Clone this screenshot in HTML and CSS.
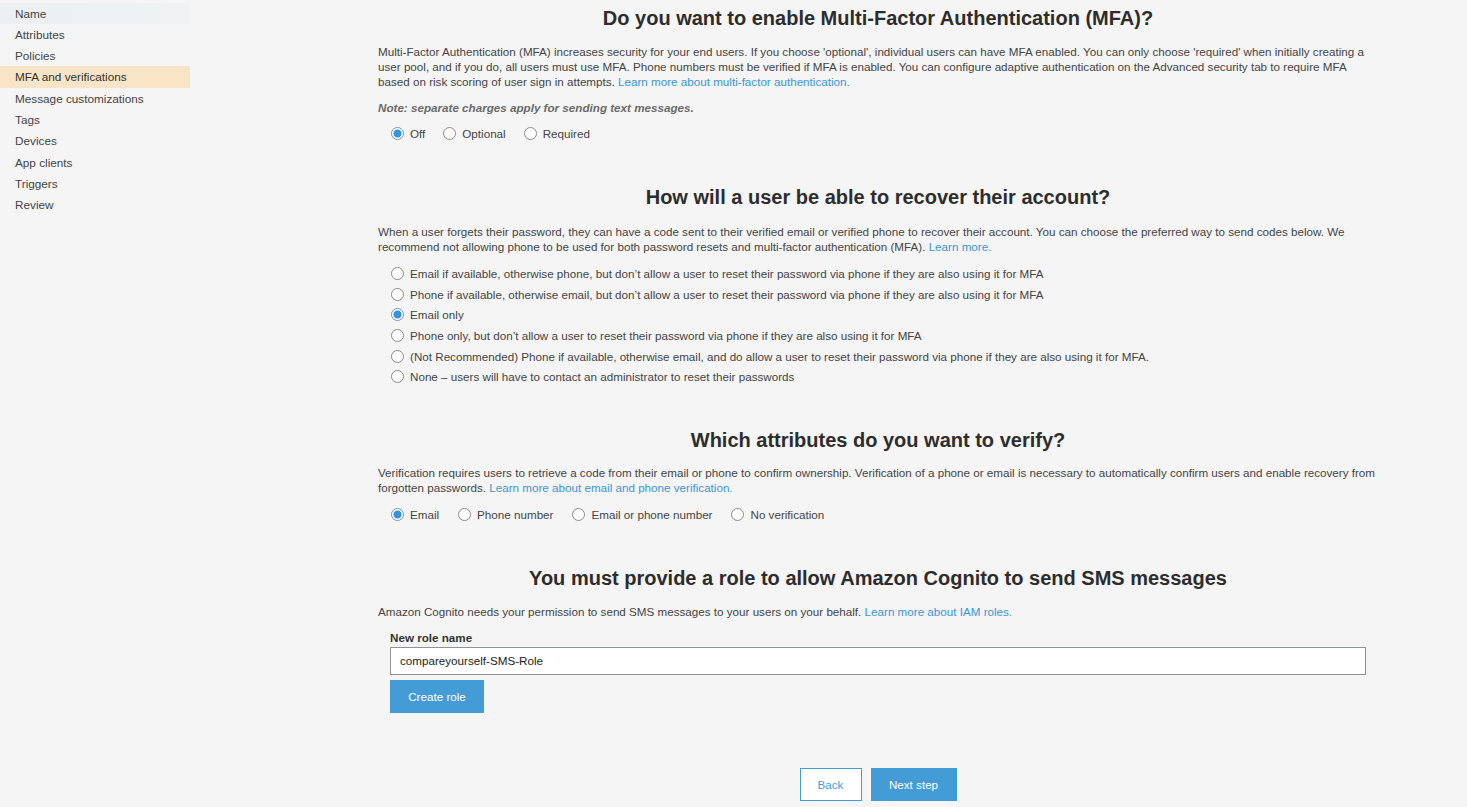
FILE: index.html
```html
<!DOCTYPE html>
<html lang="en">
<head>
<meta charset="utf-8">
<title>MFA and verifications</title>
<link rel="stylesheet" href="styles.css">
</head>
<body>
<div class="page">
  <nav class="sidebar">
    <a class="nav-item nav-hover">Name</a>
    <a class="nav-item">Attributes</a>
    <a class="nav-item">Policies</a>
    <a class="nav-item nav-active">MFA and verifications</a>
    <a class="nav-item">Message customizations</a>
    <a class="nav-item">Tags</a>
    <a class="nav-item">Devices</a>
    <a class="nav-item">App clients</a>
    <a class="nav-item">Triggers</a>
    <a class="nav-item">Review</a>
  </nav>
  <main class="content">
    <section class="section section-first">
      <h2 class="title">Do you want to enable Multi-Factor Authentication (MFA)?</h2>
      <p class="desc">Multi-Factor Authentication (MFA) increases security for your end users. If you choose 'optional', individual users can have MFA enabled. You can only choose 'required' when initially creating a user pool, and if you do, all users must use MFA. Phone numbers must be verified if MFA is enabled. You can configure adaptive authentication on the Advanced security tab to require MFA based on risk scoring of user sign in attempts. <a class="link">Learn more about multi-factor authentication.</a></p>
      <p class="note">Note: separate charges apply for sending text messages.</p>
      <div class="radio-row">
        <label class="radio"><input type="radio" name="mfa" checked><span>Off</span></label>
        <label class="radio"><input type="radio" name="mfa"><span>Optional</span></label>
        <label class="radio"><input type="radio" name="mfa"><span>Required</span></label>
      </div>
    </section>

    <section class="section section-recover">
      <h2 class="title">How will a user be able to recover their account?</h2>
      <p class="desc">When a user forgets their password, they can have a code sent to their verified email or verified phone to recover their account. You can choose the preferred way to send codes below. We recommend not allowing phone to be used for both password resets and multi-factor authentication (MFA). <a class="link">Learn more.</a></p>
      <div class="radio-list">
        <label class="radio"><input type="radio" name="rec"><span>Email if available, otherwise phone, but don’t allow a user to reset their password via phone if they are also using it for MFA</span></label>
        <label class="radio"><input type="radio" name="rec"><span>Phone if available, otherwise email, but don’t allow a user to reset their password via phone if they are also using it for MFA</span></label>
        <label class="radio"><input type="radio" name="rec" checked><span>Email only</span></label>
        <label class="radio"><input type="radio" name="rec"><span>Phone only, but don’t allow a user to reset their password via phone if they are also using it for MFA</span></label>
        <label class="radio"><input type="radio" name="rec"><span>(Not Recommended) Phone if available, otherwise email, and do allow a user to reset their password via phone if they are also using it for MFA.</span></label>
        <label class="radio"><input type="radio" name="rec"><span>None – users will have to contact an administrator to reset their passwords</span></label>
      </div>
    </section>

    <section class="section section-verify">
      <h2 class="title">Which attributes do you want to verify?</h2>
      <p class="desc">Verification requires users to retrieve a code from their email or phone to confirm ownership. Verification of a phone or email is necessary to automatically confirm users and enable recovery from forgotten passwords. <a class="link">Learn more about email and phone verification.</a></p>
      <div class="radio-row radio-row-3">
        <label class="radio"><input type="radio" name="ver" checked><span>Email</span></label>
        <label class="radio"><input type="radio" name="ver"><span>Phone number</span></label>
        <label class="radio"><input type="radio" name="ver"><span>Email or phone number</span></label>
        <label class="radio"><input type="radio" name="ver"><span>No verification</span></label>
      </div>
    </section>

    <section class="section">
      <h2 class="title">You must provide a role to allow Amazon Cognito to send SMS messages</h2>
      <p class="desc">Amazon Cognito needs your permission to send SMS messages to your users on your behalf. <a class="link">Learn more about IAM roles.</a></p>
      <div class="role-form">
        <label class="field-label" for="role">New role name</label>
        <input id="role" class="text-input" type="text" value="compareyourself-SMS-Role">
        <div><button class="btn btn-primary btn-create">Create role</button></div>
      </div>
    </section>

    <div class="footer-actions">
      <button class="btn btn-secondary">Back</button>
      <button class="btn btn-primary">Next step</button>
    </div>
  </main>
</div>
</body>
</html>
```

FILE: styles.css
```css
html, body {
  margin: 0;
  padding: 0;
  background: #f4f5f4;
}

body {
  font-family: "Liberation Sans", Arial, sans-serif;
  font-size: 11.65px;
  color: #444;
}

.page {
  display: flex;
  align-items: flex-start;
}

.sidebar {
  width: 190px;
  flex: 0 0 190px;
  display: flex;
  flex-direction: column;
  padding-top: 2.5px;
}

.nav-item {
  display: block;
  height: 21.33px;
  line-height: 21.33px;
  padding-left: 15px;
  color: #444;
  font-size: 11.75px;
  white-space: nowrap;
}

.nav-hover {
  background: linear-gradient(90deg, #edf0f2 0%, #eef1f3 70%, #f1f3f3 100%);
}

.nav-active {
  background: #f7e5c6;
  color: #333;
}

.content {
  width: 1000px;
  margin-left: 188px;
  padding-bottom: 6px;
}

.section {
  margin-top: 41.5px;
}

.section-first {
  margin-top: 6px;
}

.section-verify {
  margin-top: 40.5px;
}

.title {
  margin: 0;
  font-size: 20px;
  line-height: 24px;
  font-weight: bold;
  color: #2d2d2d;
  text-align: center;
}

.desc {
  margin: 14px 0 0;
  line-height: 15px;
  color: #444;
}

.section-recover .desc {
  margin-top: 15px;
}

.section-verify .desc {
  margin-top: 13.5px;
}

.link {
  color: #3d94d6;
  cursor: pointer;
}

.note {
  margin: 11px 0 0;
  line-height: 15px;
  font-weight: bold;
  font-style: italic;
  color: #6a6a6a;
}

.radio-row {
  display: flex;
  gap: 17px;
  margin-top: 8.5px;
  padding-left: 12px;
  height: 20px;
  align-items: center;
}

.radio-row-3 {
  margin-top: 9px;
  gap: 18px;
}

.radio-list {
  margin-top: 9.5px;
  padding-left: 12px;
  display: flex;
  flex-direction: column;
}

.radio-list .radio {
  height: 20.6px;
}

.radio {
  display: flex;
  align-items: center;
  color: #444;
  line-height: 15px;
}

.radio input {
  appearance: none;
  -webkit-appearance: none;
  margin: 0 6px 0 1px;
  width: 13px;
  height: 13px;
  border-radius: 50%;
  border: 1px solid #8b8b8b;
  background: #fff;
  box-sizing: border-box;
  flex: 0 0 13px;
}

.radio input:checked {
  border-color: #6d98c0;
  background: radial-gradient(circle, #3a93d8 0 3.6px, #ffffff 4.4px);
}

.role-form {
  padding-left: 12px;
  margin-top: 11px;
}

.field-label {
  display: block;
  font-weight: bold;
  color: #333;
  line-height: 15px;
}

.text-input {
  display: block;
  box-sizing: border-box;
  width: 976px;
  height: 28px;
  margin-top: 2px;
  padding: 0 9px;
  border: 1px solid #8f9392;
  background: #fff;
  font-family: "Liberation Sans", Arial, sans-serif;
  font-size: 11.65px;
  color: #222;
  outline: none;
}

.btn {
  height: 33px;
  box-sizing: border-box;
  font-family: "Liberation Sans", Arial, sans-serif;
  font-size: 11.65px;
  border: 1px solid #449cd6;
  padding: 0 18px;
  cursor: pointer;
}

.btn-primary {
  background: #449cd6;
  color: #fff;
}

.btn-secondary {
  background: #fff;
  color: #449cd6;
  width: 62px;
  padding: 0;
}

.btn-create {
  margin-top: 5px;
  width: 94px;
  padding: 0;
}

.footer-actions {
  display: flex;
  justify-content: center;
  gap: 9px;
  margin-top: 55px;
}

.footer-actions .btn-primary {
  width: 86px;
  padding: 0;
}
```
